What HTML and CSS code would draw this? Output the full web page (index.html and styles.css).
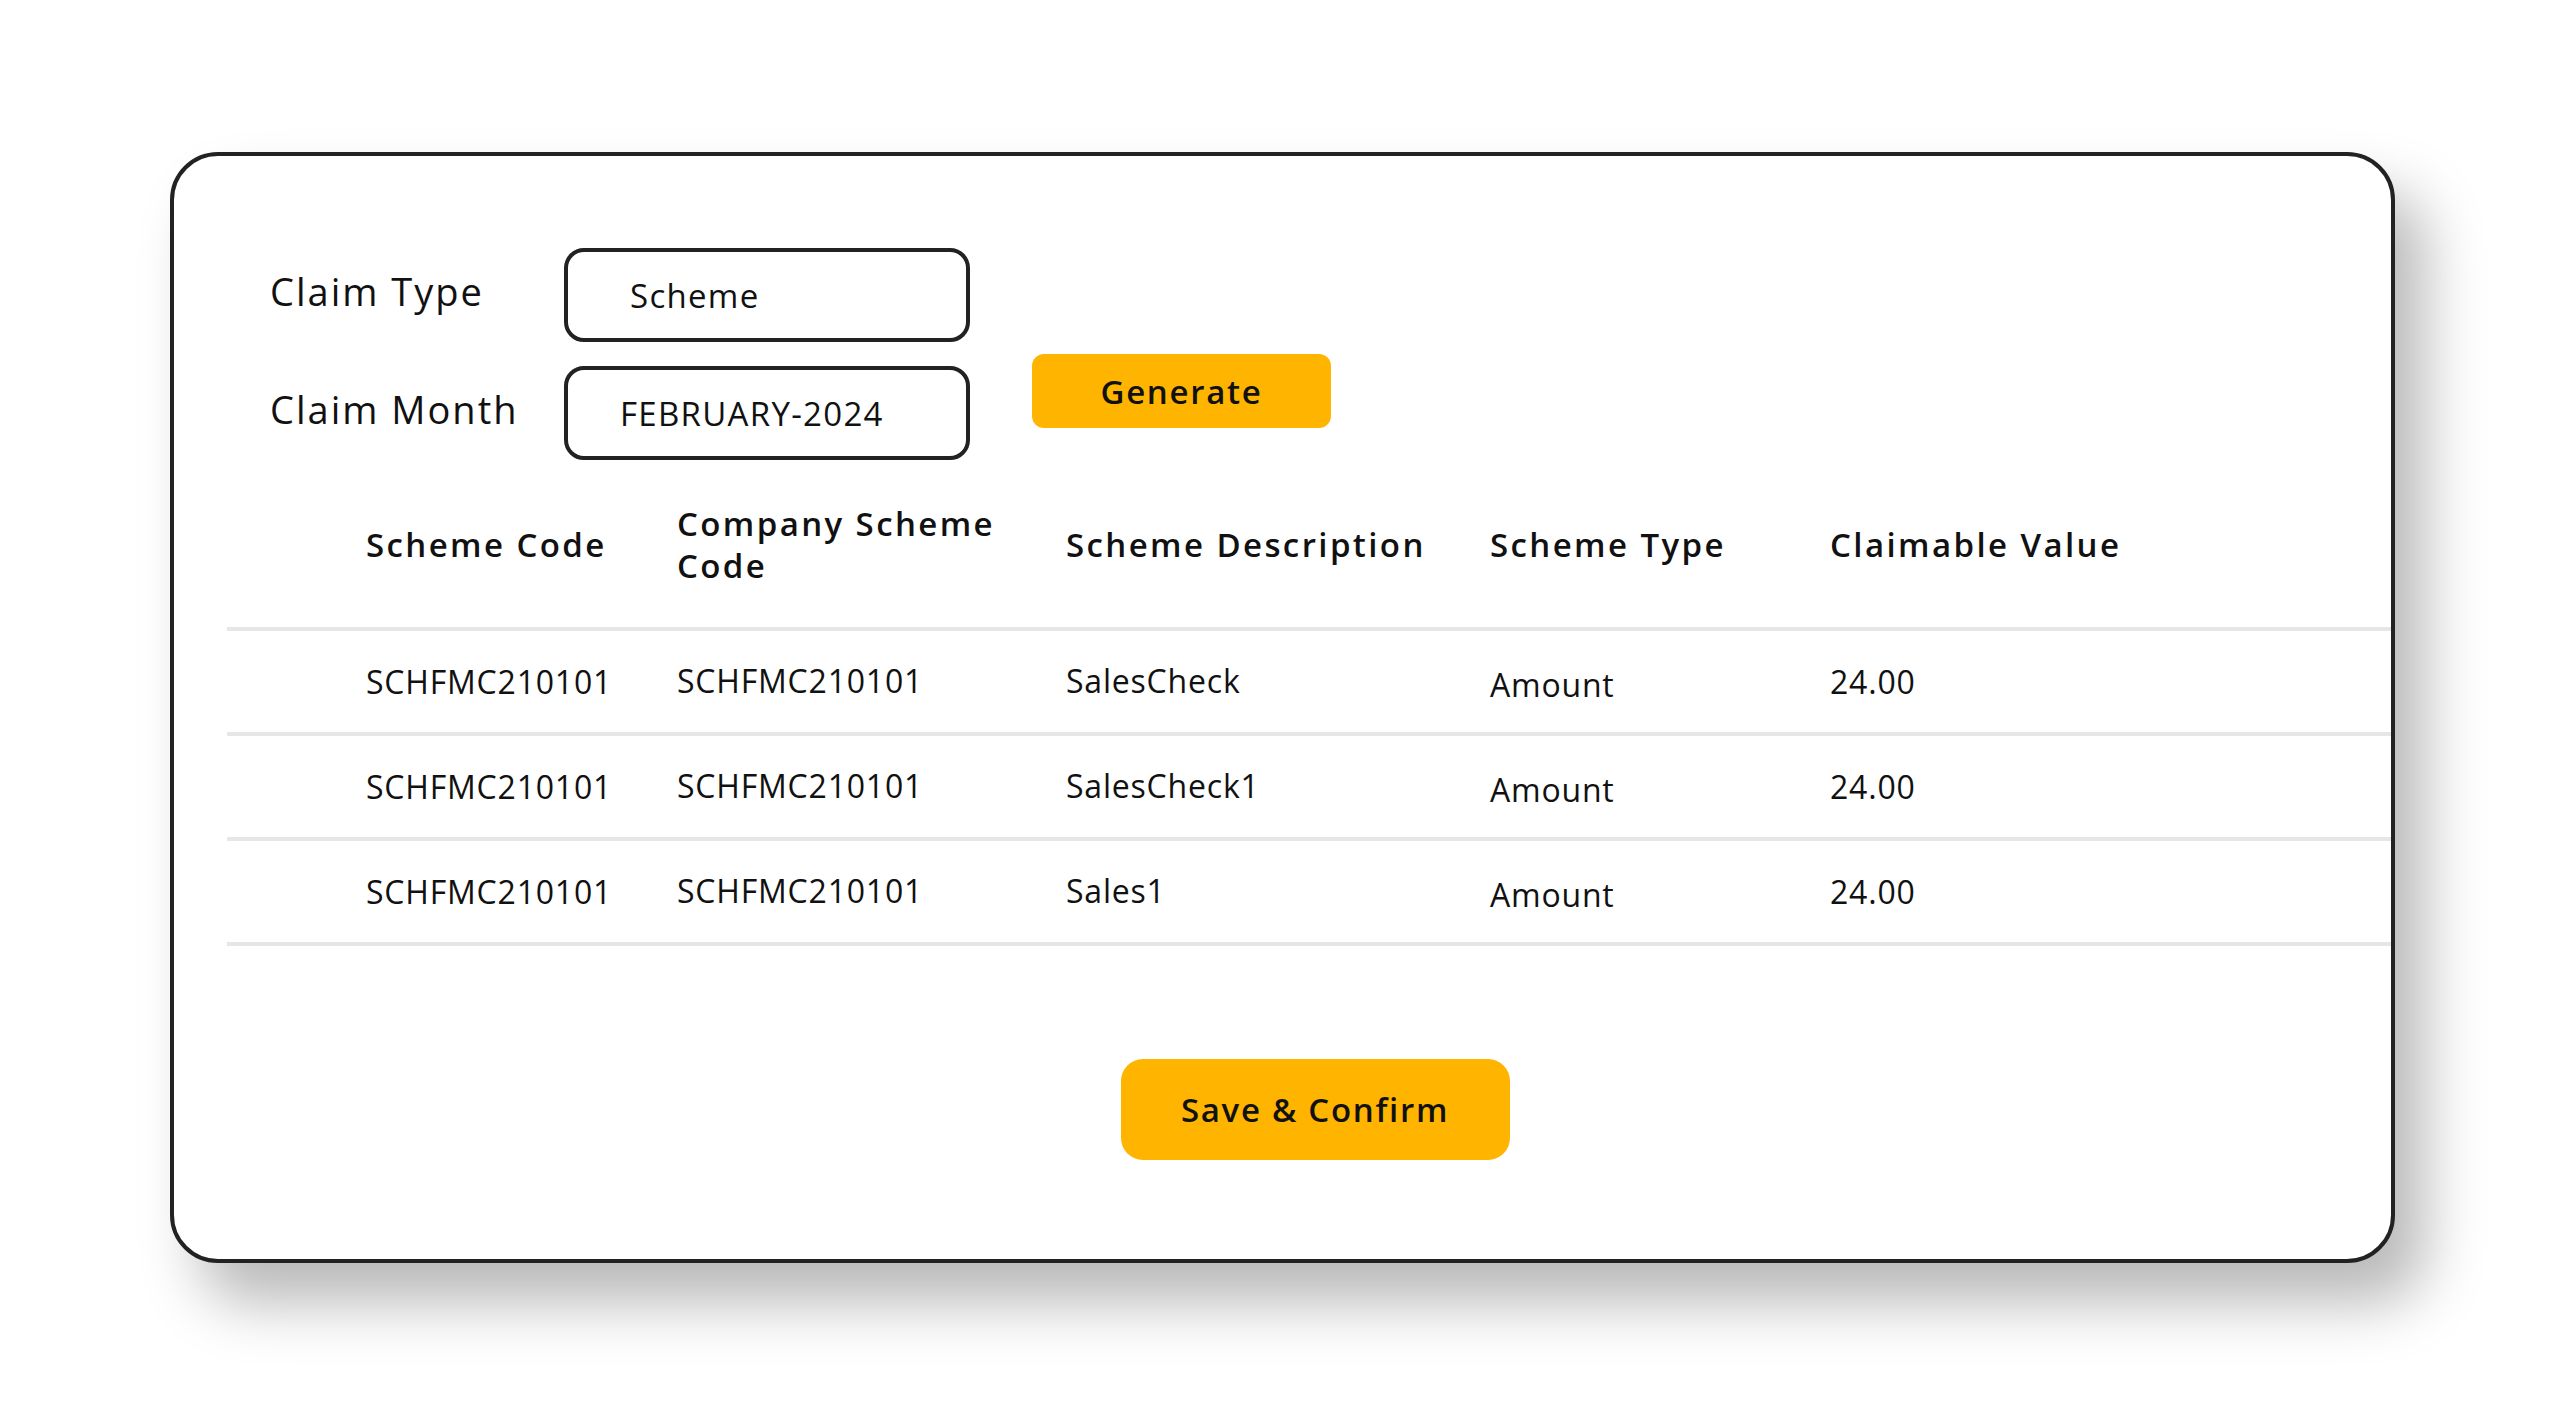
FILE: index.html
```html
<!DOCTYPE html>
<html lang="en">
<head>
    <meta charset="UTF-8">
    <meta name="viewport" content="width=device-width, initial-scale=1.0">
    <title>Claim Generation</title>
    <link rel="stylesheet" href="styles.css">
</head>
<body>
    <div class="page">
        <div class="card">
            <div class="claim-form">
                <div class="fields">
                    <label class="field-label">Claim Type</label>
                    <div class="field-box">Scheme</div>
                    <label class="field-label">Claim Month</label>
                    <div class="field-box month">FEBRUARY-2024</div>
                </div>
                <button class="btn generate-btn">Generate</button>
            </div>

            <div class="claim-table">
                <div class="row head">
                    <div class="cell">Scheme Code</div>
                    <div class="cell">Company Scheme<br>Code</div>
                    <div class="cell">Scheme Description</div>
                    <div class="cell">Scheme Type</div>
                    <div class="cell">Claimable Value</div>
                </div>
                <div class="row">
                    <div class="cell">SCHFMC210101</div>
                    <div class="cell up">SCHFMC210101</div>
                    <div class="cell up">SalesCheck</div>
                    <div class="cell down">Amount</div>
                    <div class="cell">24.00</div>
                </div>
                <div class="row">
                    <div class="cell">SCHFMC210101</div>
                    <div class="cell up">SCHFMC210101</div>
                    <div class="cell up">SalesCheck1</div>
                    <div class="cell down">Amount</div>
                    <div class="cell">24.00</div>
                </div>
                <div class="row">
                    <div class="cell">SCHFMC210101</div>
                    <div class="cell up">SCHFMC210101</div>
                    <div class="cell up">Sales1</div>
                    <div class="cell down">Amount</div>
                    <div class="cell">24.00</div>
                </div>
            </div>

            <div class="actions">
                <button class="btn save-btn">Save &amp; Confirm</button>
            </div>
        </div>
    </div>
</body>
</html>
```

FILE: styles.css
```css
body {
    margin: 0;
    background-color: #ffffff;
    font-family: "Open Sans", "Liberation Sans", sans-serif;
    color: #111111;
}
.page {
    box-sizing: border-box;
    min-height: 100vh;
    padding: 152px 0 0 170px;
}
.card {
    box-sizing: border-box;
    width: 2225px;
    height: 1111px;
    border: 4px solid #222222;
    border-radius: 48px;
    background: #ffffff;
    box-shadow: 30px 40px 60px rgba(0, 0, 0, 0.28);
    padding: 92px 0 0 0;
}

/* form */
.claim-form {
    display: flex;
    padding-left: 96px;
}
.fields {
    display: grid;
    grid-template-columns: 294px 406px;
    grid-auto-rows: 94px;
    row-gap: 24px;
    align-items: center;
}
.field-label {
    font-size: 38px;
    letter-spacing: 2px;
    padding-bottom: 8px;
}
.field-box {
    box-sizing: border-box;
    height: 94px;
    border: 4px solid #222222;
    border-radius: 20px;
    padding-left: 62px;
    display: flex;
    align-items: center;
    font-size: 33px;
    letter-spacing: 1.3px;
}
.field-box.month {
    padding-left: 52px;
}
.btn {
    border: none;
    background-color: #ffb400;
    color: #111111;
    font-family: inherit;
    font-weight: 600;
    font-size: 33px;
    letter-spacing: 1.7px;
    cursor: pointer;
}
.generate-btn {
    align-self: flex-end;
    margin: 0 0 32px 62px;
    width: 299px;
    height: 74px;
    border-radius: 12px;
}

/* table */
.claim-table {
    margin: 20px 0 0 53px;
}
.row {
    display: grid;
    grid-template-columns: 450px 389px 424px 340px 1fr;
    align-items: center;
    height: 101px;
    border-bottom: 4px solid #e6e6e6;
    font-size: 32px;
    letter-spacing: 0.8px;
}
.row .cell:first-child {
    padding-left: 139px;
}
.row.head {
    height: 84px;
    padding: 23px 0 40px;
    font-size: 33px;
    font-weight: 600;
    letter-spacing: 2.4px;
    line-height: 42px;
}
.cell.up {
    margin-top: -3px;
}
.cell.down {
    margin-top: 5px;
}

/* bottom action */
.actions {
    display: flex;
    justify-content: center;
    margin: 113px 0 0 53px;
    padding-left: 12px;
}
.save-btn {
    width: 389px;
    height: 101px;
    border-radius: 22px;
}
```
